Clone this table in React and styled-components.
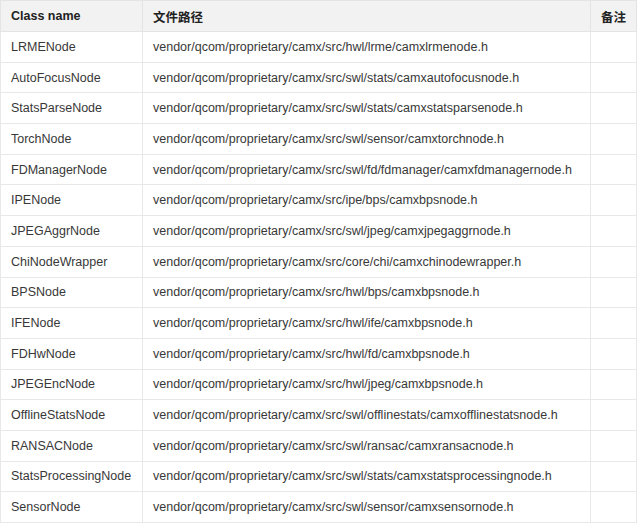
import React from 'react';
import styled, { createGlobalStyle } from 'styled-components';

const rows = [
  ['LRMENode', 'vendor/qcom/proprietary/camx/src/hwl/lrme/camxlrmenode.h'],
  ['AutoFocusNode', 'vendor/qcom/proprietary/camx/src/swl/stats/camxautofocusnode.h'],
  ['StatsParseNode', 'vendor/qcom/proprietary/camx/src/swl/stats/camxstatsparsenode.h'],
  ['TorchNode', 'vendor/qcom/proprietary/camx/src/swl/sensor/camxtorchnode.h'],
  ['FDManagerNode', 'vendor/qcom/proprietary/camx/src/swl/fd/fdmanager/camxfdmanagernode.h'],
  ['IPENode', 'vendor/qcom/proprietary/camx/src/ipe/bps/camxbpsnode.h'],
  ['JPEGAggrNode', 'vendor/qcom/proprietary/camx/src/swl/jpeg/camxjpegaggrnode.h'],
  ['ChiNodeWrapper', 'vendor/qcom/proprietary/camx/src/core/chi/camxchinodewrapper.h'],
  ['BPSNode', 'vendor/qcom/proprietary/camx/src/hwl/bps/camxbpsnode.h'],
  ['IFENode', 'vendor/qcom/proprietary/camx/src/hwl/ife/camxbpsnode.h'],
  ['FDHwNode', 'vendor/qcom/proprietary/camx/src/hwl/fd/camxbpsnode.h'],
  ['JPEGEncNode', 'vendor/qcom/proprietary/camx/src/hwl/jpeg/camxbpsnode.h'],
  ['OfflineStatsNode', 'vendor/qcom/proprietary/camx/src/swl/offlinestats/camxofflinestatsnode.h'],
  ['RANSACNode', 'vendor/qcom/proprietary/camx/src/swl/ransac/camxransacnode.h'],
  ['StatsProcessingNode', 'vendor/qcom/proprietary/camx/src/swl/stats/camxstatsprocessingnode.h'],
  ['SensorNode', 'vendor/qcom/proprietary/camx/src/swl/sensor/camxsensornode.h'],
];

const GlobalStyle = createGlobalStyle`
  body {
    margin: 0;
    background: #fff;
    font-family: "Liberation Sans", Arial, "Noto Sans CJK SC", sans-serif;
  }
`;

const Table = styled.table`
  width: 637px;
  border-collapse: collapse;
  table-layout: fixed;
  font-size: 12.5px;
  color: #383838;
`;

const HeadCell = styled.th`
  box-sizing: border-box;
  height: 31px;
  padding: 0 10px;
  text-align: left;
  font-weight: bold;
  white-space: nowrap;
  color: #222;
  background: #f2f2f2;
  border: 1px solid #e4e4e4;
  width: ${props => (props.w ? `${props.w}px` : 'auto')};
`;

const Cell = styled.td`
  box-sizing: border-box;
  height: 30.7px;
  padding: 0 10px;
  border: 1px solid #e8e8e8;
  white-space: nowrap;
  overflow: hidden;
`;

export default function App() {
  return (
    <>
      <GlobalStyle />
      <Table>
        <thead>
          <tr>
            <HeadCell w={142}>Class name</HeadCell>
            <HeadCell w={448}>文件路径</HeadCell>
            <HeadCell>备注</HeadCell>
          </tr>
        </thead>
        <tbody>
          {rows.map(([name, path]) => (
            <tr key={name}>
              <Cell>{name}</Cell>
              <Cell>{path}</Cell>
              <Cell />
            </tr>
          ))}
        </tbody>
      </Table>
    </>
  );
}
